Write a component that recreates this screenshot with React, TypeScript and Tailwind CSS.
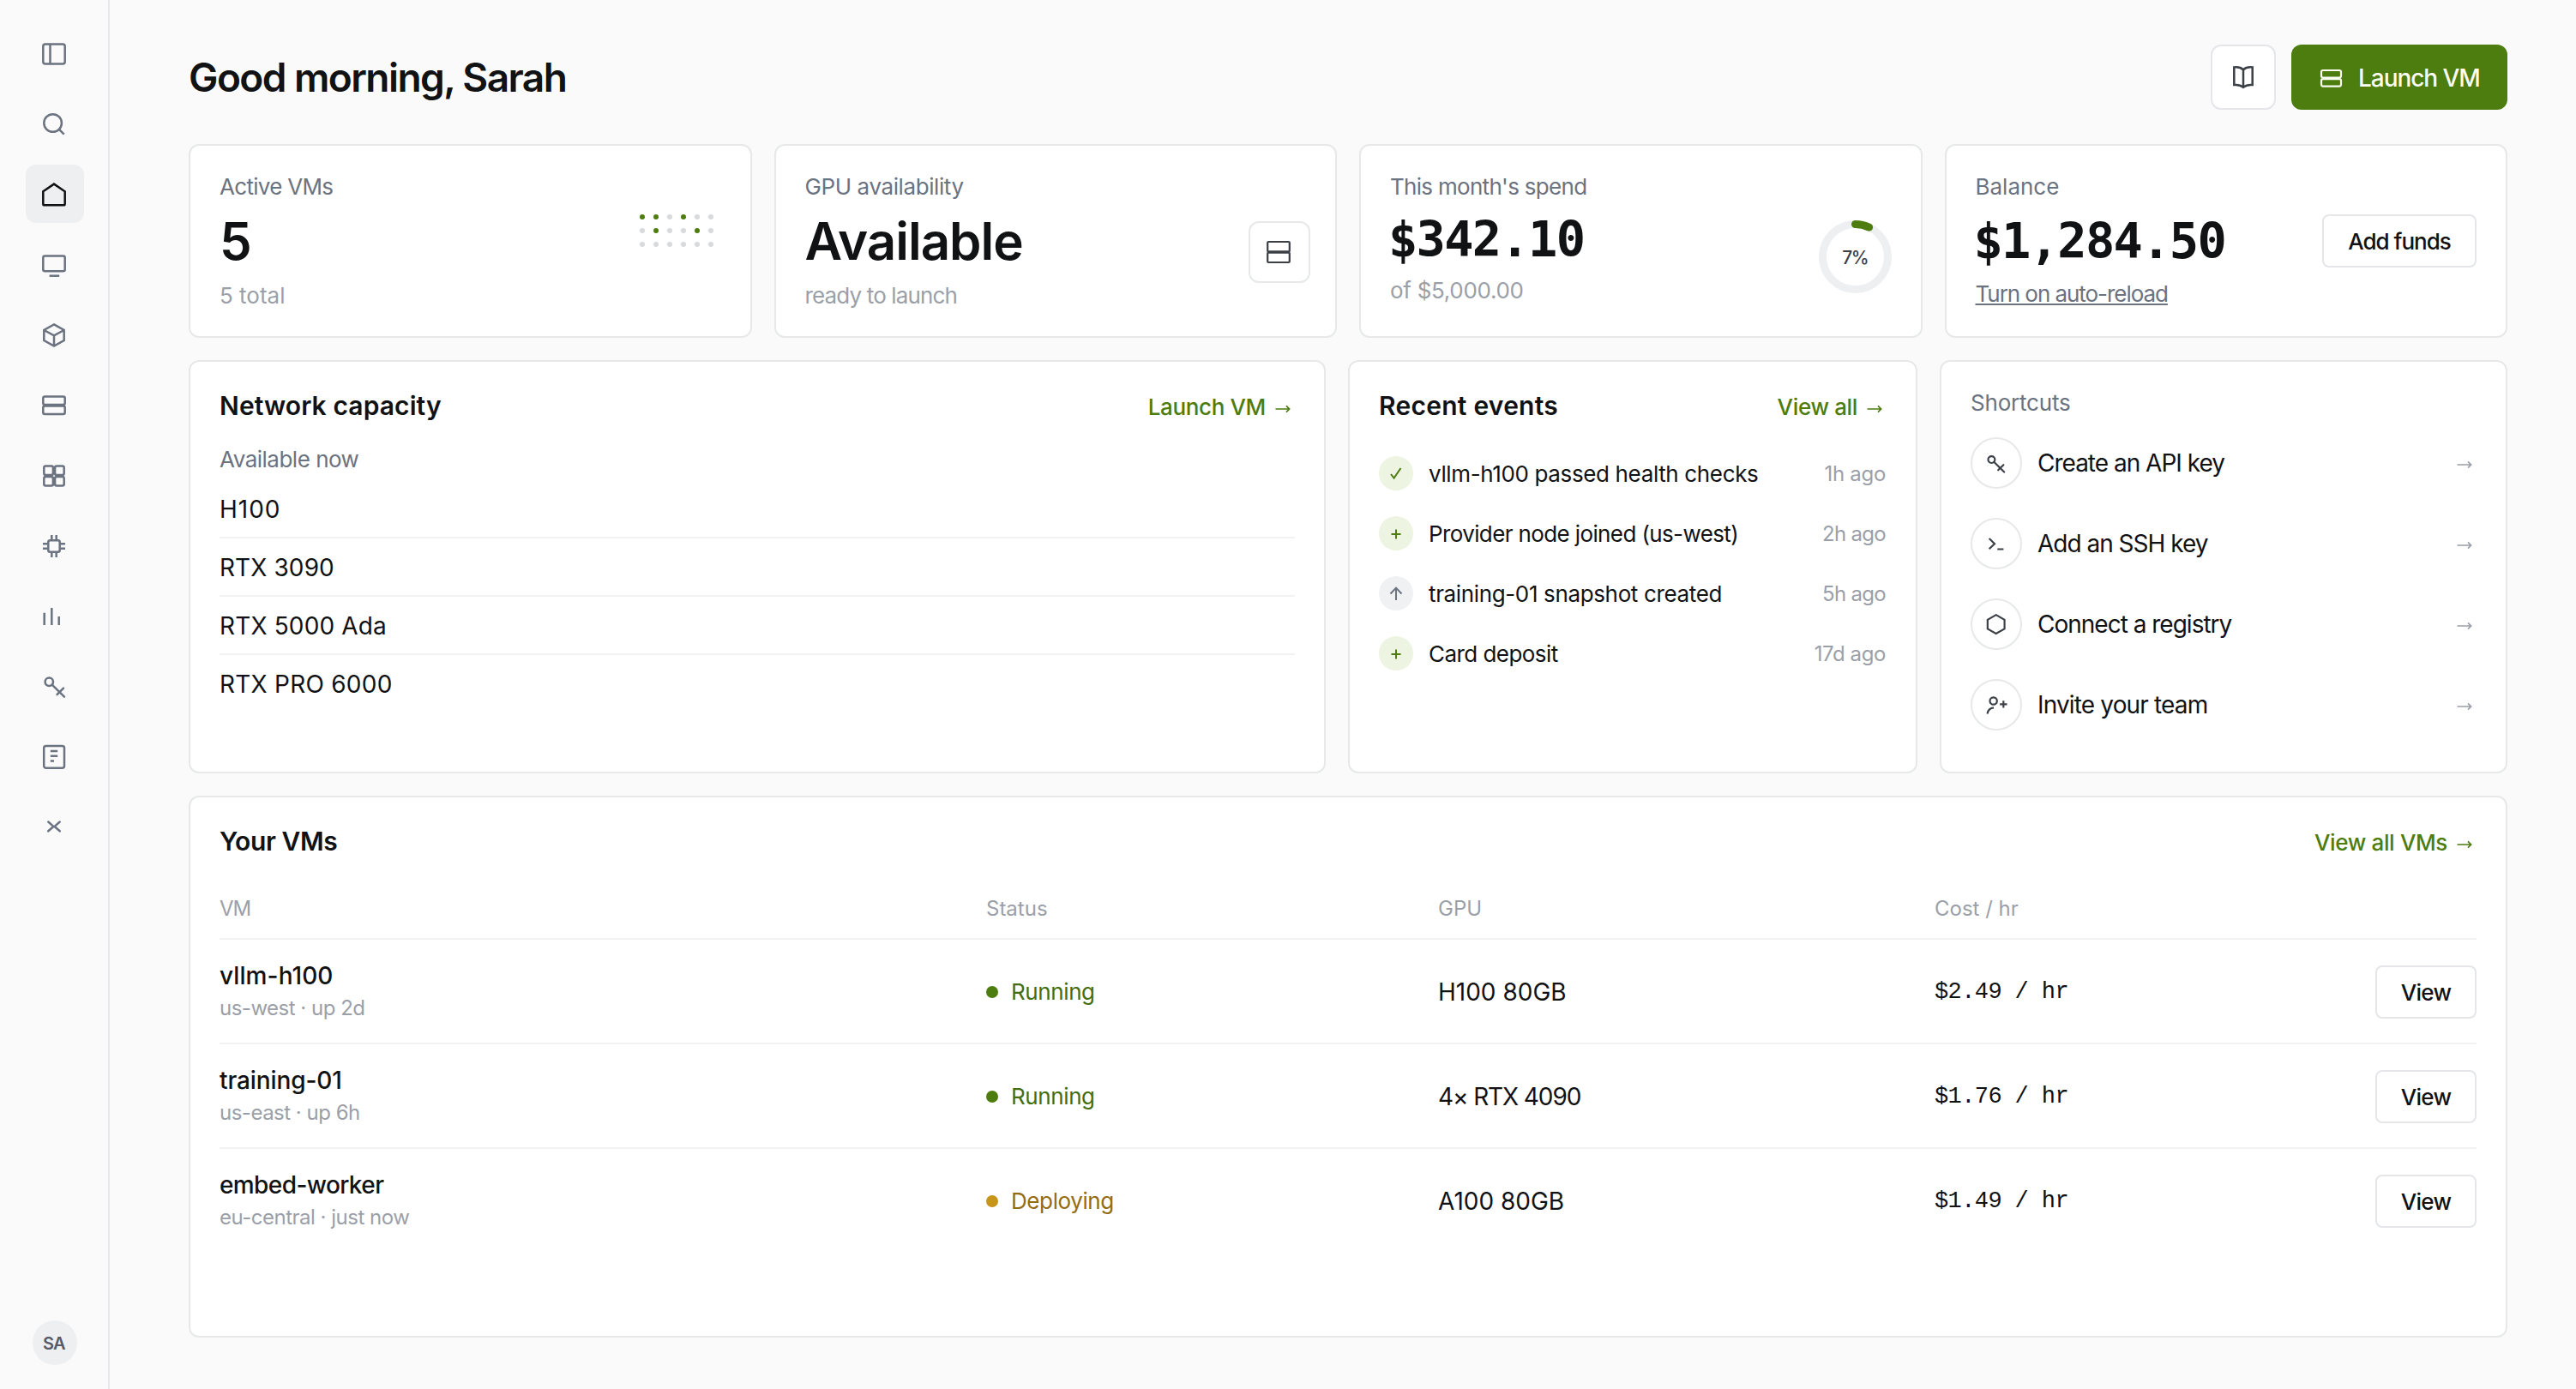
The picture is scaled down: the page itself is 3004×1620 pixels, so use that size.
import type { ReactNode } from "react"
import clsx from "clsx"

const cardClassName = "rounded-xl border-2 border-[#e7e8e9] bg-white p-[34px]"

const labelClassName = "text-[26px] leading-[27px] text-[#6b7280]"

const mutedClassName = "text-[#9b9fa8]"

const priceClassName =
  "font-['DejaVu_Sans_Mono',monospace] text-[57px] leading-[60px] font-bold tracking-[-1.7px]"

const outlineButtonClassName =
  "flex h-[62px] items-center justify-center rounded-lg border-2 border-[#e5e6e9] bg-white pt-px text-[26px] font-medium"

function Icon({
  size = 36,
  stroke = 2.5,
  children,
}: {
  size?: number
  stroke?: number
  children: ReactNode
}) {
  return (
    <svg
      width={size}
      height={size}
      viewBox="0 0 36 36"
      fill="none"
      stroke="currentColor"
      strokeWidth={stroke}
      className="shrink-0"
    >
      {children}
    </svg>
  )
}

const keyShape = (
  <>
    <circle cx="11.3" cy="13.3" r="4.7" />
    <path d="M14.7 16.6 29 30.6M20.6 28 28 20.6" strokeLinecap="round" />
  </>
)

const navItems: { name: string; icon: ReactNode }[] = [
  {
    name: "Toggle sidebar",
    icon: (
      <>
        <rect x="4.3" y="7.6" width="25.4" height="23" rx="2.5" />
        <path d="M12.5 7.6v23" />
      </>
    ),
  },
  {
    name: "Search",
    icon: (
      <>
        <circle cx="15.6" cy="17.5" r="10.3" />
        <path d="m22.7 24.6 6 6" />
      </>
    ),
  },
  {
    name: "Home",
    icon: <path d="M4.3 15.3 17 6.6l12.7 8.7v14.4q0 1.6-1.6 1.6H5.9q-1.6 0-1.6-1.6z" />,
  },
  {
    name: "Virtual machines",
    icon: (
      <>
        <rect x="4.3" y="8.4" width="25.4" height="17.8" rx="2" />
        <path d="M11.6 31.7h11.6" />
      </>
    ),
  },
  {
    name: "Images",
    icon: (
      <path d="M17 6.4 28.7 13v12L17 31.6 5.3 25V13zM5.3 13 17 19.4 28.7 13M17 19.4v12.2" />
    ),
  },
  {
    name: "Servers",
    icon: (
      <>
        <rect x="4.3" y="8.5" width="25.4" height="9.6" rx="2" />
        <rect x="4.3" y="19.4" width="25.4" height="9.6" rx="2" />
      </>
    ),
  },
  {
    name: "Apps",
    icon: (
      <>
        <rect x="5.3" y="7.5" width="10.6" height="10.4" rx="2" />
        <rect x="18.1" y="7.5" width="10.6" height="10.4" rx="2" />
        <rect x="5.3" y="20" width="10.6" height="10.4" rx="2" />
        <rect x="18.1" y="20" width="10.6" height="10.4" rx="2" />
      </>
    ),
  },
  {
    name: "Compute",
    icon: (
      <>
        <rect x="10.3" y="12.3" width="13.4" height="13.4" rx="2" />
        <path d="M14.3 6v5M19.7 6v5M14.3 27v5M19.7 27v5M4 16.3h5M4 21.7h5M25 16.3h5M25 21.7h5" />
      </>
    ),
  },
  { name: "Usage", icon: <path d="M5.7 14.7V29M14.3 9v20M22.7 19v10" /> },
  { name: "Keys", icon: keyShape },
  {
    name: "Docs",
    icon: (
      <>
        <rect x="5.2" y="6" width="23.8" height="25.8" rx="2.5" />
        <path d="M12.8 12h8.4M12.8 17.7h8.4M12.8 23.4h4.2" />
      </>
    ),
  },
  {
    name: "Collapse",
    icon: (
      <path
        d="m10.3 12.5 5.2 4.6q.9.8 0 1.6l-5.2 4.6M23.7 12.5l-5.2 4.6q-.9.8 0 1.6l5.2 4.6M15.8 17.9h2.4"
        strokeLinecap="round"
      />
    ),
  },
]

const gpus = [
  { name: "H100", tracking: "tracking-[1px]" },
  { name: "RTX 3090", tracking: "tracking-[0.1px]" },
  { name: "RTX 5000 Ada", tracking: "tracking-[0.15px]" },
  { name: "RTX PRO 6000", tracking: "tracking-[0.25px]" },
]

const events = [
  {
    kind: "check",
    text: "vllm-h100 passed health checks",
    tracking: "tracking-[-0.36px]",
    time: "1h ago",
    timeTracking: "tracking-[-0.3px]",
  },
  {
    kind: "plus",
    text: "Provider node joined (us-west)",
    tracking: "tracking-[-0.62px]",
    time: "2h ago",
    timeTracking: "tracking-[-0.7px]",
  },
  {
    kind: "up",
    text: "training-01 snapshot created",
    tracking: "tracking-[-0.36px]",
    time: "5h ago",
    timeTracking: "tracking-[-0.7px]",
  },
  {
    kind: "plus",
    text: "Card deposit",
    tracking: "tracking-[-0.55px]",
    time: "17d ago",
    timeTracking: "tracking-[-0.4px]",
  },
]

const eventPaths: Record<string, string> = {
  check: "m14 21 3.6 4.6L25.5 14",
  plus: "M20 15.5v11M14.5 21h11",
  up: "M20 28V14M13.5 20.5 20 13.6l6.5 6.9",
}

const shortcuts: { text: string; tracking: string; icon: ReactNode }[] = [
  { text: "Create an API key", tracking: "tracking-[-1px]", icon: keyShape },
  {
    text: "Add an SSH key",
    tracking: "tracking-[-1px]",
    icon: <path d="m8 10.8 7.6 7.4L8 25.6M19.5 25.8h8.6" />,
  },
  {
    text: "Connect a registry",
    tracking: "tracking-[-1px]",
    icon: <path d="M17.6 5 29.5 11.8v12.6L17.6 31.2 5.8 24.4V11.8z" />,
  },
  {
    text: "Invite your team",
    tracking: "tracking-[-0.85px]",
    icon: (
      <>
        <circle cx="14" cy="12.6" r="5" />
        <path d="M5.4 30.6q1.4-8 9-8.6M28 12.3v10M23 17.3h10" />
      </>
    ),
  },
]

const vms = [
  {
    name: "vllm-h100",
    tracking: "tracking-[0.1px]",
    meta: "us-west · up 2d",
    status: "Running",
    gpu: "H100 80GB",
    gpuTracking: "tracking-normal",
    cost: "$2.49 / hr",
  },
  {
    name: "training-01",
    tracking: "tracking-[-0.1px]",
    meta: "us-east · up 6h",
    status: "Running",
    gpu: "4× RTX 4090",
    gpuTracking: "tracking-[-1.1px]",
    cost: "$1.76 / hr",
  },
  {
    name: "embed-worker",
    tracking: "tracking-[-0.6px]",
    meta: "eu-central · just now",
    status: "Deploying",
    gpu: "A100 80GB",
    gpuTracking: "tracking-normal",
    cost: "$1.49 / hr",
  },
]

const activeDots = [0, 1, 3, 7, 10]

function Arrow() {
  return (
    <svg
      width="18"
      height="12"
      viewBox="0 0 18 12"
      fill="none"
      stroke="currentColor"
      strokeWidth="1.7"
      className="shrink-0"
    >
      <path d="M.5 6h16M13 2.4 16.6 6 13 9.6" />
    </svg>
  )
}

function CardLink({ children }: { children: string }) {
  return (
    <a
      href="#"
      className="flex items-center gap-[11px] pt-[2px] pr-[5px] text-[26px] leading-[36px] font-medium tracking-[-0.35px] text-[#4d7c0f]"
    >
      {children}
      <span className="pt-[3px]">
        <Arrow />
      </span>
    </a>
  )
}

function Sidebar() {
  return (
    <aside className="flex w-32 shrink-0 flex-col justify-between border-r-2 border-[#e6e8ed] py-7">
      <nav className="flex flex-col gap-[14px] pl-[30px]">
        {navItems.map((item) => (
          <a
            key={item.name}
            href="#"
            aria-label={item.name}
            className={clsx(
              "flex size-[68px] items-center rounded-xl pl-4",
              item.name === "Home" ? "bg-[#eeeff1] text-[#111213]" : "text-[#6b7280]"
            )}
          >
            <Icon>{item.icon}</Icon>
          </a>
        ))}
      </nav>
      <div className="ml-[38px] flex size-[52px] items-center justify-center rounded-full bg-[#eeeff1] pt-[2px] pr-[2px] text-[20px] font-semibold tracking-[-0.6px] text-[#555b66]">
        SA
      </div>
    </aside>
  )
}

export default function App() {
  return (
    <div className="flex h-[1620px] w-[3004px] bg-[#fafafa] font-['Inter',sans-serif] text-[#111213]">
      <Sidebar />

      <main className="flex flex-1 flex-col pt-[52px] pr-20 pb-[60px] pl-[92px]">
        <header className="mb-10 flex h-[76px] items-center justify-between">
          <h1 className="text-[46px] leading-[76px] font-semibold tracking-[-1.57px]">
            Good morning, Sarah
          </h1>
          <div className="flex gap-[18px]">
            <button
              type="button"
              aria-label="Docs"
              className="flex size-[76px] items-center justify-center rounded-xl border-2 border-[#e5e6e9] bg-white text-[#3b3f46]"
            >
              <Icon>
                <path d="M7.3 6.4Q14 5.6 18 9.2q4-3.6 10.7-2.8V27q-6.7-.6-10.7 2.8Q14 26.4 7.3 27zM18 9.2v20.6" />
              </Icon>
            </button>
            <button
              type="button"
              className="flex h-[76px] w-[252px] items-center gap-[18px] rounded-xl bg-[#4d7c0f] pt-px pl-8 text-[28px] font-medium tracking-[-1.05px] text-[#f9fcf3]"
            >
              <svg
                width="28"
                height="24"
                viewBox="0 0 28 24"
                fill="none"
                stroke="currentColor"
                strokeWidth="2.2"
                className="mt-px"
              >
                <rect x="3" y="3" width="23" height="8.5" rx="2" />
                <rect x="3" y="13.1" width="23" height="8.5" rx="2" />
              </svg>
              Launch VM
            </button>
          </div>
        </header>

        <section className="mb-[26px] grid h-[226px] grid-cols-4 grid-rows-[226px] gap-[26px]">
          <div className={clsx(cardClassName, "flex justify-between")}>
            <div>
              <p className={clsx(labelClassName, "tracking-[-0.7px]")}>Active VMs</p>
              <p className="mt-5 text-[60px] leading-[60px] font-semibold">5</p>
              <p className={clsx("mt-[21px] text-[26px] leading-[26px]", mutedClassName)}>
                5 total
              </p>
            </div>
            <div className="mt-[46px] mr-[9px] grid h-[38px] grid-cols-6 gap-[10px]">
              {Array.from({ length: 18 }, (_, i) => (
                <span
                  key={i}
                  className={clsx(
                    "size-[6px] rounded-full",
                    activeDots.includes(i) ? "bg-[#4d7c0f]" : "bg-[#d7d9db]"
                  )}
                />
              ))}
            </div>
          </div>

          <div className={clsx(cardClassName, "flex justify-between")}>
            <div>
              <p className={clsx(labelClassName, "tracking-[-0.4px]")}>GPU availability</p>
              <p className="mt-5 text-[60px] leading-[60px] font-semibold tracking-[-1px]">
                Available
              </p>
              <p
                className={clsx(
                  "mt-[21px] text-[26px] leading-[26px] tracking-[-0.85px]",
                  mutedClassName
                )}
              >
                ready to launch
              </p>
            </div>
            <div className="mt-[54px] -mr-[5px] flex size-[72px] items-center justify-center rounded-xl border-2 border-[#e7e8e9] pr-[2px] text-[#3b3f46]">
              <svg
                width="30"
                height="28"
                viewBox="0 0 30 28"
                fill="none"
                stroke="currentColor"
                strokeWidth="2.2"
                className="shrink-0"
              >
                <rect x="2.2" y="2" width="25.6" height="11.4" rx="1" />
                <rect x="2.2" y="14.6" width="25.6" height="11.4" rx="1" />
              </svg>
            </div>
          </div>

          <div className={clsx(cardClassName, "flex justify-between")}>
            <div>
              <p className={clsx(labelClassName, "tracking-[-0.7px]")}>This month's spend</p>
              <p className={clsx(priceClassName, "mt-[18px] -ml-[2px]")}>$342.10</p>
              <p
                className={clsx(
                  "mt-[17px] text-[26px] leading-[26px] tracking-[-0.3px]",
                  mutedClassName
                )}
              >
                of $5,000.00
              </p>
            </div>
            <svg width="85" height="85" viewBox="0 0 85 85" className="mt-[53px]">
              <circle cx="42.5" cy="42.5" r="38" fill="none" stroke="#eeeff1" strokeWidth="9" />
              <circle
                cx="42.5"
                cy="42.5"
                r="38"
                fill="none"
                stroke="#4d7c0f"
                strokeWidth="9"
                strokeLinecap="round"
                pathLength="100"
                strokeDasharray="7 93"
                transform="rotate(-90 42.5 42.5)"
              />
              <text
                x="42.3"
                y="50.5"
                textAnchor="middle"
                className="fill-[#3b3f46] text-[21px] font-medium tracking-[-1.5px]"
              >
                7%
              </text>
            </svg>
          </div>

          <div className={clsx(cardClassName, "flex justify-between")}>
            <div>
              <p className={labelClassName}>Balance</p>
              <p className={clsx(priceClassName, "mt-5 -ml-[2px]")}>$1,284.50</p>
              <a
                href="#"
                className="mt-[19px] block text-[26px] leading-[26px] tracking-[-1.05px] text-[#6b7280] underline decoration-2 underline-offset-2"
              >
                Turn on auto-reload
              </a>
            </div>
            <button
              type="button"
              className={clsx(outlineButtonClassName, "mt-[46px] w-[180px] tracking-[-1px]")}
            >
              Add funds
            </button>
          </div>
        </section>

        <section className="mb-[26px] grid h-[482px] grid-cols-[1326px_664px_1fr] gap-[26px]">
          <div className={cardClassName}>
            <div className="flex h-9 justify-between">
              <h2 className="text-[30px] leading-[35px] font-semibold tracking-[0.1px]">
                Network capacity
              </h2>
              <CardLink>Launch VM</CardLink>
            </div>
            <p className={clsx(labelClassName, "mt-[30px] tracking-[-0.5px]")}>Available now</p>
            <ul className="mt-[11px]">
              {gpus.map((gpu) => (
                <li
                  key={gpu.name}
                  className={clsx(
                    "border-b-2 border-[#f1f2f3] pt-[2px] text-[28px] leading-[64px] last:border-b-0",
                    gpu.tracking
                  )}
                >
                  {gpu.name}
                </li>
              ))}
            </ul>
          </div>

          <div className={cardClassName}>
            <div className="flex h-9 justify-between">
              <h2 className="text-[30px] leading-[35px] font-semibold tracking-[0.25px]">
                Recent events
              </h2>
              <CardLink>View all</CardLink>
            </div>
            <ul className="mt-10 flex flex-col gap-[30px]">
              {events.map((event) => (
                <li key={event.text} className="flex h-10 items-center">
                  <span
                    className={clsx(
                      "size-10 rounded-full",
                      event.kind === "up"
                        ? "bg-[#f0f1f3] text-[#6b7280]"
                        : "bg-[#edf4e1] text-[#4d7c0f]"
                    )}
                  >
                    <svg
                      width="40"
                      height="40"
                      viewBox="0 0 40 40"
                      fill="none"
                      stroke="currentColor"
                      strokeWidth="2"
                    >
                      <path d={eventPaths[event.kind]} />
                    </svg>
                  </span>
                  <span
                    className={clsx("ml-[18px] pt-[2px] text-[26px] leading-[30px]", event.tracking)}
                  >
                    {event.text}
                  </span>
                  <span
                    className={clsx(
                      "mr-px ml-auto pt-px text-[24px] leading-[30px]",
                      event.timeTracking,
                      mutedClassName
                    )}
                  >
                    {event.time}
                  </span>
                </li>
              ))}
            </ul>
          </div>

          <div className={cardClassName}>
            <p className={clsx(labelClassName, "tracking-[-0.2px]")}>Shortcuts</p>
            <ul className="mt-[27px] flex flex-col gap-[34px]">
              {shortcuts.map((shortcut) => (
                <li key={shortcut.text} className="flex items-center">
                  <span className="flex size-[60px] items-center justify-center rounded-full border-2 border-[#e7e8e9] text-[#3b3f46]">
                    <Icon size={30} stroke={2.6}>
                      {shortcut.icon}
                    </Icon>
                  </span>
                  <span
                    className={clsx("ml-[18px] text-[28px] leading-[30px]", shortcut.tracking)}
                  >
                    {shortcut.text}
                  </span>
                  <span className="mr-[5px] ml-auto pt-1 text-[#9b9fa8]">
                    <Arrow />
                  </span>
                </li>
              ))}
            </ul>
          </div>
        </section>

        <section className={clsx(cardClassName, "flex-1")}>
          <div className="flex h-9 justify-between">
            <h2 className="text-[30px] leading-[35px] font-semibold tracking-[-0.4px]">
              Your VMs
            </h2>
            <CardLink>View all VMs</CardLink>
          </div>

          <div
            className={clsx(
              "mt-12 grid grid-cols-[894px_527px_579px_1fr] border-b-2 border-[#f1f2f3] pb-[22px] text-[24px] leading-[24px]",
              mutedClassName
            )}
          >
            <span className="tracking-[-1px]">VM</span>
            <span>Status</span>
            <span>GPU</span>
            <span>Cost / hr</span>
          </div>
          {vms.map((vm) => (
            <div
              key={vm.name}
              className="grid h-[122px] grid-cols-[894px_527px_579px_1fr_auto] items-center border-b-2 border-[#f1f2f3] pt-px last:border-b-transparent"
            >
              <div className="-mt-px">
                <p className={clsx("text-[28px] leading-[28px] font-medium", vm.tracking)}>
                  {vm.name}
                </p>
                <p
                  className={clsx(
                    "mt-3 text-[24px] leading-[24px] tracking-[-0.5px]",
                    mutedClassName
                  )}
                >
                  {vm.meta}
                </p>
              </div>
              <div
                className={clsx(
                  "flex items-center gap-[15px] text-[26px] tracking-[-0.4px]",
                  vm.status === "Running" ? "text-[#446e10]" : "text-[#946c12]"
                )}
              >
                <span
                  className={clsx(
                    "size-[14px] rounded-full",
                    vm.status === "Running" ? "bg-[#4d7c0f]" : "bg-[#c6951a]"
                  )}
                />
                {vm.status}
              </div>
              <span className={clsx("text-[28px]", vm.gpuTracking)}>{vm.gpu}</span>
              <span className="pt-[2px] font-['Liberation_Mono',monospace] text-[27px] tracking-[-0.6px]">
                {vm.cost}
              </span>
              <button
                type="button"
                className={clsx(outlineButtonClassName, "w-[118px] tracking-[-0.7px]")}
              >
                View
              </button>
            </div>
          ))}
        </section>
      </main>
    </div>
  )
}
